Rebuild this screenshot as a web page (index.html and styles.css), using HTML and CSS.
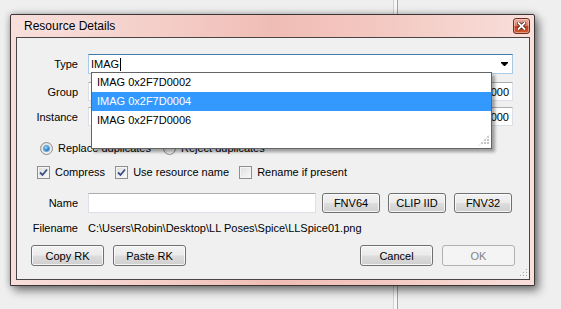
FILE: index.html
```html
<!DOCTYPE html>
<html lang="en">
<head>
    <meta charset="UTF-8">
    <title>Resource Details</title>
    <link rel="stylesheet" href="styles.css">
</head>
<body>
    <div class="splitter"></div>

    <div class="window">
        <div class="titlebar">
            <span class="title">Resource Details</span>
            <div class="close">
                <svg width="9" height="8" viewBox="0 0 9 8">
                    <path d="M1.5 1 L7.5 7 M7.5 1 L1.5 7" stroke="#4a1c14" stroke-width="3.4" stroke-linecap="square"/>
                    <path d="M1.5 1 L7.5 7 M7.5 1 L1.5 7" stroke="#ffffff" stroke-width="1.8" stroke-linecap="square"/>
                </svg>
            </div>
        </div>

        <div class="client">
            <div class="row row-type">
                <span class="lbl">Type</span>
                <div class="combo">
                    <span class="combo-text">IMAG</span><span class="caret"></span>
                    <svg class="combo-arrow" width="7" height="4" viewBox="0 0 7 4">
                        <polygon points="0,0 7,0 7,1 4,4 3,4 0,1" fill="#000"/>
                    </svg>
                </div>
            </div>
            <div class="row row-group">
                <span class="lbl">Group</span>
                <div class="field num">0x00000000</div>
            </div>
            <div class="row row-instance">
                <span class="lbl">Instance</span>
                <div class="field num">0x0000000000000000</div>
            </div>

            <div class="opts radios">
                <label class="opt opt-replace"><span class="radio on"></span>Replace duplicates</label>
                <label class="opt"><span class="radio"></span>Reject duplicates</label>
            </div>

            <div class="opts checks">
                <label class="opt"><span class="check on"><svg width="9" height="9" viewBox="0 0 9 9"><path d="M1 4.5 L3.5 7 L8 1.5" fill="none" stroke="#3b4f86" stroke-width="1.8"/></svg></span>Compress</label>
                <label class="opt"><span class="check on"><svg width="9" height="9" viewBox="0 0 9 9"><path d="M1 4.5 L3.5 7 L8 1.5" fill="none" stroke="#3b4f86" stroke-width="1.8"/></svg></span>Use resource name</label>
                <label class="opt"><span class="check"></span>Rename if present</label>
            </div>

            <div class="row row-name">
                <span class="lbl">Name</span>
                <div class="field name-field"></div>
                <button class="btn btn-hash">FNV64</button>
                <button class="btn btn-hash">CLIP IID</button>
                <button class="btn btn-hash">FNV32</button>
            </div>

            <div class="row row-file">
                <span class="lbl">Filename</span>
                <span class="path">C:\Users\Robin\Desktop\LL Poses\Spice\LLSpice01.png</span>
            </div>

            <div class="actions">
                <button class="btn btn-act">Copy RK</button>
                <button class="btn btn-act">Paste RK</button>
                <div class="spacer"></div>
                <button class="btn btn-act">Cancel</button>
                <button class="btn btn-act" disabled>OK</button>
            </div>

            <div class="dropdown">
                <div class="item">IMAG 0x2F7D0002</div>
                <div class="item selected">IMAG 0x2F7D0004</div>
                <div class="item">IMAG 0x2F7D0006</div>
                <svg class="grip" width="12" height="12" viewBox="0 0 12 12">
                    <g fill="#c2c2c2">
                        <rect x="9" y="1" width="2" height="2"/>
                        <rect x="6" y="4" width="2" height="2"/><rect x="9" y="4" width="2" height="2"/>
                        <rect x="3" y="7" width="2" height="2"/><rect x="6" y="7" width="2" height="2"/><rect x="9" y="7" width="2" height="2"/>
                    </g>
                    <path d="M0 11.5 L11.5 0" stroke="#e4e4e4" stroke-width="1"/>
                </svg>
            </div>

            <svg class="grip client-grip" width="10" height="10" viewBox="0 0 10 10">
                <g fill="#fff">
                    <rect x="8" y="2" width="1" height="1"/>
                    <rect x="5" y="5" width="1" height="1"/><rect x="8" y="5" width="1" height="1"/>
                    <rect x="2" y="8" width="1" height="1"/><rect x="5" y="8" width="1" height="1"/><rect x="8" y="8" width="1" height="1"/>
                </g>
                <g fill="#a8a8a8">
                    <rect x="7" y="1" width="1" height="1"/>
                    <rect x="4" y="4" width="1" height="1"/><rect x="7" y="4" width="1" height="1"/>
                    <rect x="1" y="7" width="1" height="1"/><rect x="4" y="7" width="1" height="1"/><rect x="7" y="7" width="1" height="1"/>
                </g>
            </svg>
        </div>
    </div>
</body>
</html>
```

FILE: styles.css
```css
body {
    margin: 0;
    width: 561px;
    height: 309px;
    position: relative;
    overflow: hidden;
    background-color: #efefef;
    font-family: 'Liberation Sans', Arial, sans-serif;
    font-size: 11px;
    color: #000;
}
.splitter {
    position: absolute;
    left: 393px;
    top: 0;
    width: 3px;
    height: 100%;
    background-color: #f7f7f7;
    border-left: 1px solid #cfcfcf;
    border-right: 1px solid #a3a3a3;
}

/* window frame */
.window {
    position: absolute;
    left: 10px;
    top: 14px;
    width: 525px;
    height: 272px;
    box-sizing: border-box;
    border: 1px solid #3b3535;
    border-radius: 2px 2px 0 0;
    padding: 0 4px 5px 5px;
    display: flex;
    flex-direction: column;
    background: linear-gradient(90deg, #f8dedb 0%, #f4cdc7 30%, #f0bdb5 50%, #f3c8c1 70%, #f9dfdb 100%);
    box-shadow: 0 0 7px rgba(0, 0, 0, 0.3), 4px 5px 10px rgba(0, 0, 0, 0.45);
}
.titlebar {
    height: 22px;
    display: flex;
    align-items: center;
    justify-content: space-between;
    padding-left: 8px;
}
.title {
    font-size: 12px;
    text-shadow: 0 0 6px rgba(255, 255, 255, 0.9);
}
.close {
    align-self: flex-start;
    margin-top: 3px;
    width: 17px;
    height: 16px;
    box-sizing: border-box;
    border: 1px solid #6b2e24;
    border-radius: 3px;
    display: flex;
    align-items: center;
    justify-content: center;
    background: linear-gradient(#eab0a2 0%, #d9826c 45%, #c03b1e 55%, #d05a2e 100%);
    box-shadow: inset 0 0 0 1px rgba(255, 220, 210, 0.5);
}
.client {
    flex: 1;
    position: relative;
    border: 1px solid #4a4444;
    background-color: #f0f0f0;
    padding: 16px 16px 0 0;
    display: flex;
    flex-direction: column;
}

/* label + field rows */
.row {
    display: flex;
    align-items: center;
}
.lbl {
    width: 61px;
    margin-right: 10px;
    text-align: right;
    flex-shrink: 0;
}
.combo {
    flex: 1;
    height: 20px;
    box-sizing: border-box;
    border: 1px solid #a9cae5;
    border-top-color: #3d7bad;
    background-color: #fff;
    display: flex;
    align-items: center;
    padding-left: 2px;
}
.caret {
    width: 1px;
    height: 13px;
    margin-left: 1px;
    background-color: #000;
}
.combo-arrow {
    margin-left: auto;
    margin-right: 4px;
}
.field {
    flex: 1;
    height: 19px;
    box-sizing: border-box;
    border: 1px solid #dbdfe6;
    border-top-color: #abadb3;
    background-color: #fff;
    display: flex;
    align-items: center;
    padding: 0 3px;
}
.field.num {
    justify-content: flex-end;
}
.row-group {
    margin-top: 8px;
}
.row-instance {
    margin-top: 6px;
}

/* radio + check rows */
.opts {
    display: flex;
    align-items: center;
    height: 16px;
}
.radios {
    margin-top: 14px;
    padding-left: 23px;
}
.checks {
    margin-top: 8px;
    padding-left: 20px;
}
.opt {
    display: flex;
    align-items: center;
    gap: 5px;
    margin-right: 10px;
}
.opt-replace {
    margin-right: 12px;
}
.radio {
    width: 13px;
    height: 13px;
    box-sizing: border-box;
    border-radius: 50%;
    border: 1px solid #8e8f8f;
    background: radial-gradient(circle at 60% 65%, #f6f6f6 0%, #d8d8d8 100%);
    display: flex;
    align-items: center;
    justify-content: center;
}
.radio.on::after {
    content: '';
    width: 5px;
    height: 5px;
    border-radius: 50%;
    background: radial-gradient(circle at 40% 35%, #b8e1fa 0%, #2f8ad4 50%, #0c3e86 100%);
    box-shadow: 0 0 0 1px #6aa6d6;
}
.check {
    width: 13px;
    height: 13px;
    box-sizing: border-box;
    border: 1px solid #8e8f8f;
    background: linear-gradient(135deg, #dcdcdc 0%, #fafafa 100%);
    box-shadow: inset 0 0 0 1px #f4f4f4;
    display: flex;
    align-items: center;
    justify-content: center;
}

/* name + filename */
.row-name {
    margin-top: 12px;
}
.name-field {
    flex: none;
    width: 228px;
    height: 20px;
    margin-right: 6px;
}
.btn {
    height: 21px;
    box-sizing: border-box;
    padding: 0;
    border: 1px solid #707070;
    border-radius: 3px;
    background: linear-gradient(#f2f2f2 0%, #ebebeb 48%, #dddddd 52%, #cfcfcf 100%);
    box-shadow: inset 0 0 0 1px rgba(252, 252, 252, 0.8);
    font-family: 'Liberation Sans', Arial, sans-serif;
    font-size: 11px;
    color: #000;
}
.btn:disabled {
    border-color: #adb2b5;
    background: #f4f4f4;
    box-shadow: none;
    color: #838383;
}
.btn-hash {
    width: 58px;
    height: 20px;
    margin-left: 8px;
    margin-top: 1px;
}
.btn-hash:first-of-type {
    margin-left: 0;
}
.row-file {
    margin-top: 8px;
    height: 14px;
}

/* bottom buttons */
.actions {
    margin-top: 10px;
    padding-left: 14px;
    margin-right: -2px;
    display: flex;
    gap: 9px;
}
.btn-act {
    width: 73px;
}
.spacer {
    flex: 1;
}

/* open combo list */
.dropdown {
    position: absolute;
    left: 74px;
    top: 34px;
    width: 401px;
    height: 77px;
    box-sizing: border-box;
    border: 1px solid #646464;
    background-color: #fff;
    box-shadow: 3px 3px 3px rgba(0, 0, 0, 0.35);
}
.item {
    height: 19px;
    line-height: 19px;
    padding-left: 5px;
}
.item.selected {
    background-color: #3399ff;
    color: #fff;
}
.grip {
    position: absolute;
    right: 1px;
    bottom: 1px;
}
.client-grip {
    right: 0;
    bottom: 1px;
}
```
